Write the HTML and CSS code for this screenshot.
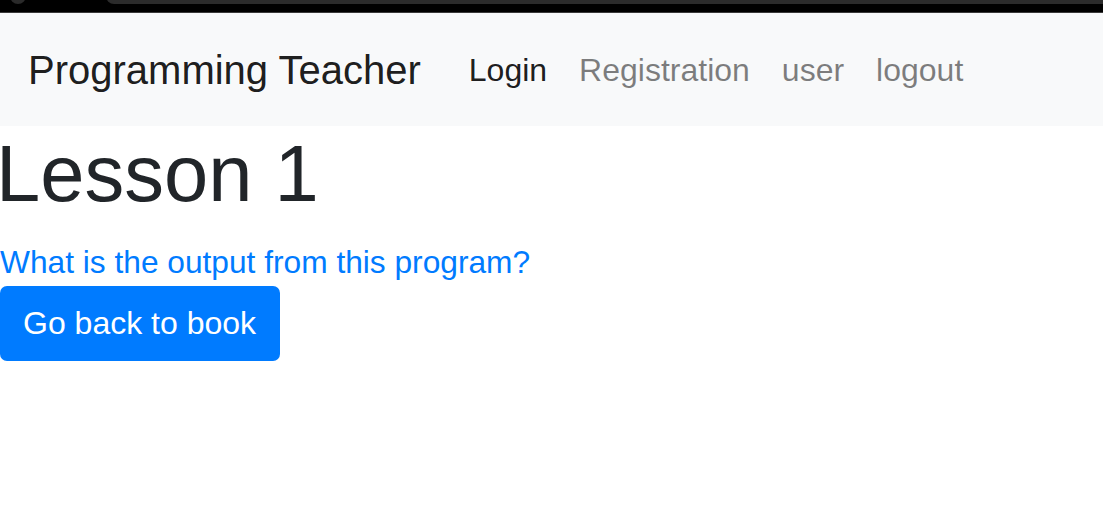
FILE: index.html
```html
<!DOCTYPE html>
<html lang="en">
<head>
<meta charset="utf-8">
<title>Programming Teacher</title>
<link rel="stylesheet" href="styles.css">
</head>
<body>
<div class="chrome">
  <span class="chrome-dot"></span>
  <span class="chrome-bar"></span>
</div>
<nav class="navbar">
  <a class="brand" href="#">Programming Teacher</a>
  <ul class="nav">
    <li><a class="nav-link active" href="#">Login</a></li>
    <li><a class="nav-link" href="#">Registration</a></li>
    <li><a class="nav-link" href="#">user</a></li>
    <li><a class="nav-link" href="#">logout</a></li>
  </ul>
</nav>
<main class="content">
  <h1 class="title">Lesson 1</h1>
  <a class="question" href="#">What is the output from this program?</a>
  <div><a class="btn" href="#">Go back to book</a></div>
</main>
</body>
</html>
```
FILE: styles.css
```css
html, body {
  margin: 0;
  padding: 0;
  background: #fff;
  font-family: "Liberation Sans", Arial, sans-serif;
  color: #212529;
}
.chrome {
  height: 12px;
  background: #000;
  border-bottom: 1px solid #3a3a3a;
  position: relative;
  overflow: hidden;
}
.chrome-dot {
  position: absolute;
  left: 10px;
  top: -12px;
  width: 16px;
  height: 16px;
  border-radius: 50%;
  background: #2a2a2a;
}
.chrome-bar {
  position: absolute;
  left: 106px;
  right: 0;
  top: -8px;
  height: 12px;
  border-radius: 0 0 0 8px;
  background: #2b2b2b;
}
.navbar {
  display: flex;
  align-items: center;
  background: #f8f9fa;
  padding: 17px 32px 16px 28px;
}
.brand {
  font-size: 40px;
  line-height: 60px;
  padding: 10px 0;
  margin-right: 32px;
  color: rgba(0,0,0,.9);
  text-decoration: none;
  white-space: nowrap;
}
.nav {
  display: flex;
  list-style: none;
  margin: 0;
  padding: 0;
}
.nav-link {
  display: block;
  font-size: 32px;
  line-height: 48px;
  padding: 16px 16px;
  color: rgba(0,0,0,.5);
  text-decoration: none;
}
.nav-link.active {
  color: rgba(0,0,0,.9);
}
.content {
  padding: 0;
}
.title {
  margin: 0 0 16px;
  font-size: 79.5px;
  font-weight: 400;
  line-height: 96px;
  margin-left: -4px;
}
.question {
  display: block;
  font-size: 31.7px;
  line-height: 48px;
  color: #007bff;
  text-decoration: none;
}
.btn {
  display: inline-block;
  font-size: 32px;
  line-height: 48px;
  padding: 13px 24px 14px 23px;
  background: #007bff;
  color: #fff;
  border-radius: 7px;
  text-decoration: none;
}
```
